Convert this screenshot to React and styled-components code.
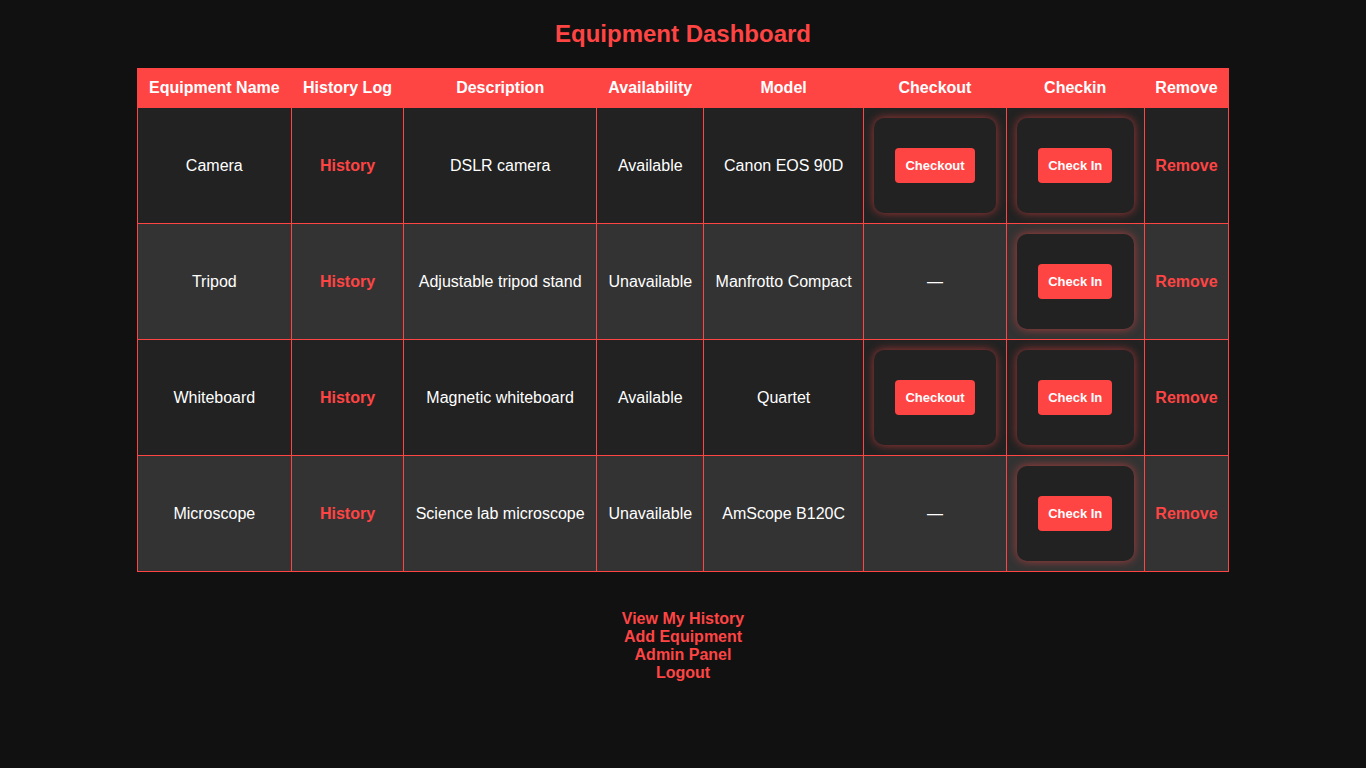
import styled, { createGlobalStyle } from "styled-components";

const red = "#ff4444";

const GlobalStyle = createGlobalStyle`
  body {
    margin: 0;
    background: #111111;
    color: #ffffff;
    font-family: "Liberation Sans", Arial, sans-serif;
  }
`;

const Page = styled.div`
  padding: 20px 0;
  text-align: center;
`;

const Title = styled.h1`
  margin: 0 0 20px;
  font-size: 24px;
  color: ${red};
`;

const Table = styled.table`
  width: 80%;
  margin: 0 auto;
  border-collapse: collapse;
  font-size: 16px;
`;

const HeadCell = styled.th`
  background: ${red};
  color: #ffffff;
  padding: 10px;
  font-weight: bold;
  border: 1px solid ${red};
`;

const Row = styled.tr`
  background: ${(p) => (p.$odd ? "#333333" : "#222222")};
`;

const Cell = styled.td`
  padding: 10px;
  border: 1px solid ${red};
  text-align: center;
  vertical-align: middle;
`;

const RedLink = styled.a`
  color: ${red};
  font-weight: bold;
  text-decoration: none;
  cursor: pointer;
`;

const ActionCard = styled.div`
  background: #222222;
  border-radius: 10px;
  padding: 30px 20px;
  box-shadow: 0 0 10px rgba(255, 68, 68, 0.6);
  display: flex;
  justify-content: center;
`;

const ActionButton = styled.button`
  background: ${red};
  color: #ffffff;
  border: none;
  border-radius: 4px;
  padding: 10px;
  font-family: "Liberation Sans", Arial, sans-serif;
  font-size: 13px;
  font-weight: bold;
  cursor: pointer;
`;

const Nav = styled.nav`
  margin-top: 38px;
  display: flex;
  flex-direction: column;
  align-items: center;
`;

const items = [
  { name: "Camera", desc: "DSLR camera", available: true, model: "Canon EOS 90D" },
  { name: "Tripod", desc: "Adjustable tripod stand", available: false, model: "Manfrotto Compact" },
  { name: "Whiteboard", desc: "Magnetic whiteboard", available: true, model: "Quartet" },
  { name: "Microscope", desc: "Science lab microscope", available: false, model: "AmScope B120C" },
];

const headers = [
  "Equipment Name",
  "History Log",
  "Description",
  "Availability",
  "Model",
  "Checkout",
  "Checkin",
  "Remove",
];

export default function App() {
  return (
    <>
      <GlobalStyle />
      <Page>
        <Title>Equipment Dashboard</Title>
        <Table>
          <thead>
            <tr>
              {headers.map((h) => (
                <HeadCell key={h}>{h}</HeadCell>
              ))}
            </tr>
          </thead>
          <tbody>
            {items.map((item, i) => (
              <Row key={item.name} $odd={i % 2 === 1}>
                <Cell>{item.name}</Cell>
                <Cell>
                  <RedLink>History</RedLink>
                </Cell>
                <Cell>{item.desc}</Cell>
                <Cell>{item.available ? "Available" : "Unavailable"}</Cell>
                <Cell>{item.model}</Cell>
                <Cell>
                  {item.available ? (
                    <ActionCard>
                      <ActionButton>Checkout</ActionButton>
                    </ActionCard>
                  ) : (
                    "—"
                  )}
                </Cell>
                <Cell>
                  <ActionCard>
                    <ActionButton>Check In</ActionButton>
                  </ActionCard>
                </Cell>
                <Cell>
                  <RedLink>Remove</RedLink>
                </Cell>
              </Row>
            ))}
          </tbody>
        </Table>
        <Nav>
          <RedLink>View My History</RedLink>
          <RedLink>Add Equipment</RedLink>
          <RedLink>Admin Panel</RedLink>
          <RedLink>Logout</RedLink>
        </Nav>
      </Page>
    </>
  );
}
